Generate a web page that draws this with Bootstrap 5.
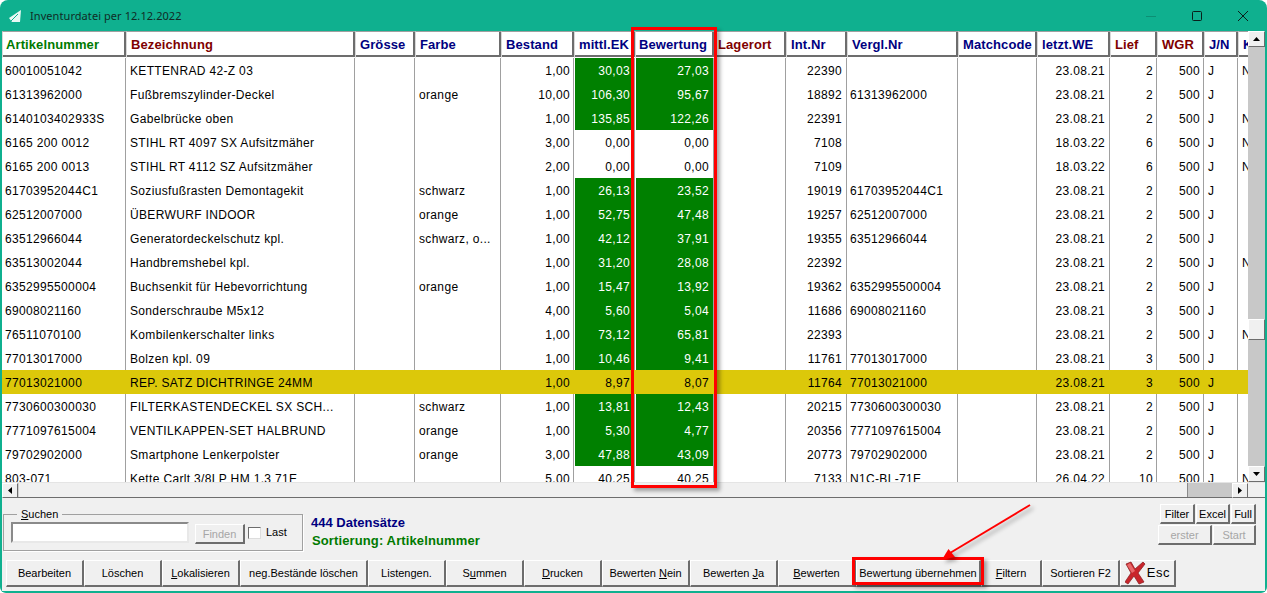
<!doctype html>
<html lang="de">
<head>
<meta charset="utf-8">
<title>Inventurdatei</title>
<link href="https://cdn.jsdelivr.net/npm/bootstrap@5.3.0/dist/css/bootstrap.min.css" rel="stylesheet">
<style>
html,body{height:100%;margin:0;background:#fff;overflow:hidden}
body{font:11px/14px "Liberation Sans",Arial,sans-serif;color:#000}
.appwin{position:relative;width:1267px;height:593px;background:#0fb08f;border-radius:8px 8px 6px 6px;overflow:hidden;padding:0 2px 2px}
.titlebar{height:31px;margin:0 -2px;padding-left:9px;color:#102c26;font:11px/16px "Noto Sans","Open Sans",sans-serif;letter-spacing:.07px}
.titlebar .ttl{margin-left:8px}
.ticon{margin-top:2px}
.wctls{margin-right:1px}
.wctl{width:46px;height:31px}
.mainarea{height:451px;background:#fff}
.gridpane{width:1246px;height:451px;overflow:hidden}
.datagrid{table-layout:fixed;width:1266px;border-collapse:separate;border-spacing:0;margin:0;font-size:12px;line-height:14px}
.datagrid col:nth-child(1){width:124px}.datagrid col:nth-child(2){width:229px}.datagrid col:nth-child(3){width:60px}
.datagrid col:nth-child(4){width:86px}.datagrid col:nth-child(5){width:73px}.datagrid col:nth-child(6){width:61px}
.datagrid col:nth-child(7){width:79px}.datagrid col:nth-child(8){width:72px}.datagrid col:nth-child(9){width:61px}
.datagrid col:nth-child(10){width:111px}.datagrid col:nth-child(11){width:79px}.datagrid col:nth-child(12){width:73px}
.datagrid col:nth-child(13){width:47px}.datagrid col:nth-child(14){width:47px}.datagrid col:nth-child(15){width:34px}
.datagrid col:nth-child(16){width:30px}
.table.datagrid>thead>tr>th{height:27px;padding:1px 1px 0 4px;font-size:13px;font-weight:700;line-height:14px;letter-spacing:.1px;white-space:nowrap;overflow:hidden;vertical-align:middle;background:#fff;border-top:1px solid #a0a0a0;border-bottom:1px solid #fff;border-left:1px solid #d8d8d8;box-shadow:inset -2px -2px 0 #6d6d6d}
.table.datagrid>thead>tr>th:first-child,.table.datagrid>thead>tr>th:nth-child(7),.table.datagrid>thead>tr>th:nth-child(8){padding-left:3px}
.table.datagrid>tbody>tr>td{height:24px;padding:1px 3px 0 3px;letter-spacing:.34px;white-space:nowrap;overflow:hidden;vertical-align:middle;background:#fff;color:#000;border-right:1px solid #a0a0a0;box-shadow:none}
.table.datagrid>tbody>tr>td.nm{padding-left:4px}
.table.datagrid>tbody>tr>td.pr4{padding-right:4px}
.table.datagrid>tbody>tr>td.gr{background:#008000;color:#fff;border-left:1px solid #fff}
.table.datagrid>tbody>tr.hl>td,.table.datagrid>tbody>tr.hl>td.gr{background:#dcc80a;color:#000;border-color:#dcc80a}
.table.datagrid>thead>tr>th.cg{color:#007a00}.table.datagrid>thead>tr>th.cr{color:#800000}.table.datagrid>thead>tr>th.cb{color:#000080}
.vbar{width:17px;height:451px;background:#c8c8c8}
.sbtn{background:#f0f0f0;border-top:1px solid #fff;border-left:1px solid #fff;border-right:1px solid #6d6d6d;border-bottom:1px solid #6d6d6d}
.vbar .sbtn{height:16px;flex:none}
.vbar .vthumb{height:21px;margin-top:272px;flex:none}
.vgap{flex:1}
.hbar{height:16px;background:#f0f0f0;border-top:1px solid #e4e4e4;border-bottom:1px solid #6d6d6d}
.hbar .sbtn{width:16px;height:15px;flex:none}
.hthumb{width:1170px;flex:none;border-right:1px solid #8a8a8a;border-left:1px solid #cfcfcf}
.htrack{width:44px;background:#c8c8c8;flex:none}
.panel{height:93px;background:#f0f0f0}
.toparea{height:62px}
.searchbox{width:300px;height:44px;margin:9px 0 0 1px;border:1px solid #a0a0a0;padding:0 0 0 7px;box-shadow:1px 1px 0 #fff}
.searchbox legend{float:none;width:auto;margin:0 0 0 6px;padding:0 4px;font-size:11px;line-height:14px}
.srchinput{width:178px;height:21px;padding:0;margin-top:1px;border-radius:0;background:#fff;border:2px solid;border-color:#8a8a8a #e8e8e8 #e8e8e8 #8a8a8a}
.bvl{border-radius:0;padding:0;background:#f0f0f0;color:#000;font-size:11px;line-height:14px;border-style:solid;border-width:1px 2px 2px 1px;border-color:#fff #6d6d6d #6d6d6d #fff;white-space:nowrap}
.bvl:disabled{background:#f0f0f0;color:#a6a6a6;opacity:1;border-color:#fff #6d6d6d #6d6d6d #fff}
.findbtn{width:50px;height:20px;margin:3px 0 0 6px}
.ckbox{width:13px;height:12px;margin:6px 0 0 3px;background:#fff;border:1px solid;border-color:#6d6d6d #ddd #ddd #6d6d6d;flex:none}
.lastlbl{margin:4px 0 0 5px}
.infobox{margin:16px 0 0 8px;font-size:13px;font-weight:700;line-height:18px}
.infonavy{color:#000080}.infogrn{color:#007a00;padding-left:1px;letter-spacing:.12px}
.rbtns{margin:6px 9px 0 0}
.rrow{gap:1px;height:20px}
.rrow2{margin-top:1px}
.w34{width:35px}.w33{width:34px}.w25{width:25px}.w54{width:54px}.w43{width:43px}
.btnrow{padding-left:4px;height:27px}
.btnrow .bvl{height:27px;flex:none}
.b78{width:78px}.b128{width:128px}.b88{width:88px}.b125{width:125px}.b61{width:61px}.b56{width:56px}
.btnrow .escinner{font-size:13px;letter-spacing:.6px;gap:1px}
.annot{position:absolute;border:3px solid #f00;box-shadow:3px 3px 4px rgba(0,0,0,.35);pointer-events:none}
.annot1{left:631px;top:27px;width:86px;height:461px}
.annot2{left:852px;top:557px;width:132px;height:28px}
.arrowsvg{position:absolute;left:0;top:0;width:1267px;height:593px;pointer-events:none;filter:drop-shadow(3px 3px 2px rgba(0,0,0,.35))}
</style>
</head>
<body>
<div class="appwin d-flex flex-column">
  <div class="titlebar d-flex align-items-center">
    <svg class="ticon" width="13" height="13" viewBox="0 0 13 13"><polygon points="0,8 12,0 11,12 3,12" fill="#e9f8f4"/><polyline points="2,11 9,4" fill="none" stroke="#0fb08f" stroke-width="1"/></svg>
    <span class="ttl">Inventurdatei per 12.12.2022</span>
    <div class="wctls ms-auto d-flex">
      <div class="wctl d-flex align-items-center justify-content-center"><svg width="10" height="10" viewBox="0 0 10 10"><line x1="0" y1="5.5" x2="10" y2="5.5" stroke="#0c8f74"/></svg></div>
      <div class="wctl d-flex align-items-center justify-content-center"><svg width="10" height="10" viewBox="0 0 10 10"><rect x=".5" y=".5" width="9" height="9" rx="1" fill="none" stroke="#0a1f1a"/></svg></div>
      <div class="wctl d-flex align-items-center justify-content-center"><svg width="10" height="10" viewBox="0 0 10 10"><path d="M0 0L10 10M10 0L0 10" stroke="#0a1f1a" fill="none"/></svg></div>
    </div>
  </div>
  <div class="mainarea d-flex">
    <div class="gridpane">
      <table class="table table-borderless datagrid">
        <colgroup><col><col><col><col><col><col><col><col><col><col><col><col><col><col><col><col></colgroup>
        <thead><tr>
          <th class="cg">Artikelnummer</th><th class="cr">Bezeichnung</th><th class="cb">Grösse</th><th class="cb">Farbe</th><th class="cb">Bestand</th><th class="cb">mittl.EK</th><th class="cb">Bewertung</th><th class="cr">Lagerort</th><th class="cb">Int.Nr</th><th class="cb">Vergl.Nr</th><th class="cb">Matchcode</th><th class="cb">letzt.WE</th><th class="cr">Lief</th><th class="cr">WGR</th><th class="cb">J/N</th><th class="cb">K</th>
        </tr></thead>
        <tbody>
<tr><td>60010051042</td><td class="nm">KETTENRAD 42-Z 03</td><td></td><td class="nm"></td><td class="text-end">1,00</td><td class="text-end gr pr4">30,03</td><td class="text-end gr pr4">27,03</td><td></td><td class="text-end pr4">22390</td><td></td><td></td><td class="text-end pr4">23.08.21</td><td class="text-end">2</td><td class="text-end">500</td><td class="nm">J</td><td class="nm">N</td></tr>
<tr><td>61313962000</td><td class="nm">Fußbremszylinder-Deckel</td><td></td><td class="nm">orange</td><td class="text-end">10,00</td><td class="text-end gr pr4">106,30</td><td class="text-end gr pr4">95,67</td><td></td><td class="text-end pr4">18892</td><td>61313962000</td><td></td><td class="text-end pr4">23.08.21</td><td class="text-end">2</td><td class="text-end">500</td><td class="nm">J</td><td class="nm"></td></tr>
<tr><td>6140103402933S</td><td class="nm">Gabelbrücke oben</td><td></td><td class="nm"></td><td class="text-end">1,00</td><td class="text-end gr pr4">135,85</td><td class="text-end gr pr4">122,26</td><td></td><td class="text-end pr4">22391</td><td></td><td></td><td class="text-end pr4">23.08.21</td><td class="text-end">2</td><td class="text-end">500</td><td class="nm">J</td><td class="nm">N</td></tr>
<tr><td>6165 200 0012</td><td class="nm">STIHL RT 4097 SX Aufsitzmäher</td><td></td><td class="nm"></td><td class="text-end">3,00</td><td class="text-end pr4">0,00</td><td class="text-end pr4">0,00</td><td></td><td class="text-end pr4">7108</td><td></td><td></td><td class="text-end pr4">18.03.22</td><td class="text-end">6</td><td class="text-end">500</td><td class="nm">J</td><td class="nm">N</td></tr>
<tr><td>6165 200 0013</td><td class="nm">STIHL RT 4112 SZ Aufsitzmäher</td><td></td><td class="nm"></td><td class="text-end">2,00</td><td class="text-end pr4">0,00</td><td class="text-end pr4">0,00</td><td></td><td class="text-end pr4">7109</td><td></td><td></td><td class="text-end pr4">18.03.22</td><td class="text-end">6</td><td class="text-end">500</td><td class="nm">J</td><td class="nm">N</td></tr>
<tr><td>61703952044C1</td><td class="nm">Soziusfußrasten Demontagekit</td><td></td><td class="nm">schwarz</td><td class="text-end">1,00</td><td class="text-end gr pr4">26,13</td><td class="text-end gr pr4">23,52</td><td></td><td class="text-end pr4">19019</td><td>61703952044C1</td><td></td><td class="text-end pr4">23.08.21</td><td class="text-end">2</td><td class="text-end">500</td><td class="nm">J</td><td class="nm"></td></tr>
<tr><td>62512007000</td><td class="nm">ÜBERWURF INDOOR</td><td></td><td class="nm">orange</td><td class="text-end">1,00</td><td class="text-end gr pr4">52,75</td><td class="text-end gr pr4">47,48</td><td></td><td class="text-end pr4">19257</td><td>62512007000</td><td></td><td class="text-end pr4">23.08.21</td><td class="text-end">2</td><td class="text-end">500</td><td class="nm">J</td><td class="nm"></td></tr>
<tr><td>63512966044</td><td class="nm">Generatordeckelschutz kpl.</td><td></td><td class="nm">schwarz, o...</td><td class="text-end">1,00</td><td class="text-end gr pr4">42,12</td><td class="text-end gr pr4">37,91</td><td></td><td class="text-end pr4">19355</td><td>63512966044</td><td></td><td class="text-end pr4">23.08.21</td><td class="text-end">2</td><td class="text-end">500</td><td class="nm">J</td><td class="nm"></td></tr>
<tr><td>63513002044</td><td class="nm">Handbremshebel kpl.</td><td></td><td class="nm"></td><td class="text-end">1,00</td><td class="text-end gr pr4">31,20</td><td class="text-end gr pr4">28,08</td><td></td><td class="text-end pr4">22392</td><td></td><td></td><td class="text-end pr4">23.08.21</td><td class="text-end">2</td><td class="text-end">500</td><td class="nm">J</td><td class="nm">N</td></tr>
<tr><td>6352995500004</td><td class="nm">Buchsenkit für Hebevorrichtung</td><td></td><td class="nm">orange</td><td class="text-end">1,00</td><td class="text-end gr pr4">15,47</td><td class="text-end gr pr4">13,92</td><td></td><td class="text-end pr4">19362</td><td>6352995500004</td><td></td><td class="text-end pr4">23.08.21</td><td class="text-end">2</td><td class="text-end">500</td><td class="nm">J</td><td class="nm"></td></tr>
<tr><td>69008021160</td><td class="nm">Sonderschraube M5x12</td><td></td><td class="nm"></td><td class="text-end">4,00</td><td class="text-end gr pr4">5,60</td><td class="text-end gr pr4">5,04</td><td></td><td class="text-end pr4">11686</td><td>69008021160</td><td></td><td class="text-end pr4">23.08.21</td><td class="text-end">3</td><td class="text-end">500</td><td class="nm">J</td><td class="nm"></td></tr>
<tr><td>76511070100</td><td class="nm">Kombilenkerschalter links</td><td></td><td class="nm"></td><td class="text-end">1,00</td><td class="text-end gr pr4">73,12</td><td class="text-end gr pr4">65,81</td><td></td><td class="text-end pr4">22393</td><td></td><td></td><td class="text-end pr4">23.08.21</td><td class="text-end">2</td><td class="text-end">500</td><td class="nm">J</td><td class="nm">N</td></tr>
<tr><td>77013017000</td><td class="nm">Bolzen kpl. 09</td><td></td><td class="nm"></td><td class="text-end">1,00</td><td class="text-end gr pr4">10,46</td><td class="text-end gr pr4">9,41</td><td></td><td class="text-end pr4">11761</td><td>77013017000</td><td></td><td class="text-end pr4">23.08.21</td><td class="text-end">3</td><td class="text-end">500</td><td class="nm">J</td><td class="nm"></td></tr>
<tr class="hl"><td>77013021000</td><td class="nm">REP. SATZ DICHTRINGE 24MM</td><td></td><td class="nm"></td><td class="text-end">1,00</td><td class="text-end gr pr4">8,97</td><td class="text-end gr pr4">8,07</td><td></td><td class="text-end pr4">11764</td><td>77013021000</td><td></td><td class="text-end pr4">23.08.21</td><td class="text-end">3</td><td class="text-end">500</td><td class="nm">J</td><td class="nm"></td></tr>
<tr><td>7730600300030</td><td class="nm">FILTERKASTENDECKEL SX SCH...</td><td></td><td class="nm">schwarz</td><td class="text-end">1,00</td><td class="text-end gr pr4">13,81</td><td class="text-end gr pr4">12,43</td><td></td><td class="text-end pr4">20215</td><td>7730600300030</td><td></td><td class="text-end pr4">23.08.21</td><td class="text-end">2</td><td class="text-end">500</td><td class="nm">J</td><td class="nm"></td></tr>
<tr><td>7771097615004</td><td class="nm">VENTILKAPPEN-SET HALBRUND</td><td></td><td class="nm">orange</td><td class="text-end">1,00</td><td class="text-end gr pr4">5,30</td><td class="text-end gr pr4">4,77</td><td></td><td class="text-end pr4">20356</td><td>7771097615004</td><td></td><td class="text-end pr4">23.08.21</td><td class="text-end">2</td><td class="text-end">500</td><td class="nm">J</td><td class="nm"></td></tr>
<tr><td>79702902000</td><td class="nm">Smartphone Lenkerpolster</td><td></td><td class="nm">orange</td><td class="text-end">3,00</td><td class="text-end gr pr4">47,88</td><td class="text-end gr pr4">43,09</td><td></td><td class="text-end pr4">20773</td><td>79702902000</td><td></td><td class="text-end pr4">23.08.21</td><td class="text-end">2</td><td class="text-end">500</td><td class="nm">J</td><td class="nm"></td></tr>
<tr><td>803-071</td><td class="nm">Kette Carlt 3/8LP HM 1,3 71E</td><td></td><td class="nm"></td><td class="text-end">5,00</td><td class="text-end pr4">40,25</td><td class="text-end pr4">40,25</td><td></td><td class="text-end pr4">7133</td><td>N1C-BL-71E</td><td></td><td class="text-end pr4">26.04.22</td><td class="text-end">10</td><td class="text-end">500</td><td class="nm">J</td><td class="nm">N</td></tr>
        </tbody>
      </table>
    </div>
    <div class="vbar d-flex flex-column">
      <div class="sbtn d-flex align-items-center justify-content-center"><svg width="7" height="4" viewBox="0 0 7 4"><polygon points="3.5,0 7,4 0,4" fill="#000"/></svg></div>
      <div class="sbtn vthumb"></div>
      <div class="vgap"></div>
      <div class="sbtn d-flex align-items-center justify-content-center"><svg width="7" height="4" viewBox="0 0 7 4"><polygon points="0,0 7,0 3.5,4" fill="#000"/></svg></div>
    </div>
  </div>
  <div class="hbar d-flex">
    <div class="sbtn d-flex align-items-center justify-content-center"><svg width="4" height="7" viewBox="0 0 4 7"><polygon points="4,0 4,7 0,3.5" fill="#000"/></svg></div>
    <div class="hthumb"></div>
    <div class="htrack"></div>
    <div class="sbtn d-flex align-items-center justify-content-center"><svg width="4" height="7" viewBox="0 0 4 7"><polygon points="0,0 4,3.5 0,7" fill="#000"/></svg></div>
  </div>
  <div class="panel d-flex flex-column">
    <div class="toparea d-flex">
      <fieldset class="searchbox">
        <legend><u>S</u>uchen</legend>
        <div class="d-flex">
          <input class="srchinput form-control" type="text" aria-label="Suchen">
          <button class="btn bvl findbtn" disabled>Finden</button>
          <div class="ckbox"></div>
          <span class="lastlbl">Last</span>
        </div>
      </fieldset>
      <div class="infobox">
        <div class="infonavy">444 Datensätze</div>
        <div class="infogrn">Sortierung: Artikelnummer</div>
      </div>
      <div class="rbtns ms-auto d-flex flex-column align-items-end">
        <div class="rrow d-flex">
          <button class="btn bvl w34">Filter</button><button class="btn bvl w33">Excel</button><button class="btn bvl w25">Full</button>
        </div>
        <div class="rrow rrow2 d-flex">
          <button class="btn bvl w54" disabled>erster</button><button class="btn bvl w43" disabled>Start</button>
        </div>
      </div>
    </div>
    <div class="btnrow d-flex">
      <button class="btn bvl b78">Bearbeiten</button>
      <button class="btn bvl b78">Löschen</button>
      <button class="btn bvl b78"><u>L</u>okalisieren</button>
      <button class="btn bvl b128">neg.Bestände löschen</button>
      <button class="btn bvl b78">Listengen.</button>
      <button class="btn bvl b78">S<u>u</u>mmen</button>
      <button class="btn bvl b78"><u>D</u>rucken</button>
      <button class="btn bvl b88">Bewerten <u>N</u>ein</button>
      <button class="btn bvl b88">Bewerten <u>J</u>a</button>
      <button class="btn bvl b78"><u>B</u>ewerten</button>
      <button class="btn bvl b125">Bewertung übernehmen</button>
      <button class="btn bvl b61"><u>F</u>iltern</button>
      <button class="btn bvl b78">Sortieren F2</button>
      <button class="btn bvl b56 d-flex align-items-center justify-content-center escinner">
        <svg width="21" height="24" viewBox="0 0 21 24"><polygon points="1,3 6,1 10,8 18,1 20,3 13,12 19,21 14,23 9,15 3,23 0,21 6,12" fill="#c9252b" stroke="#8f2226" stroke-width=".8"/><polygon points="2,4 5,2 10,10 7,12" fill="#e8696b"/></svg>
        <span>Esc</span>
      </button>
    </div>
  </div>
  <div class="annot annot1"></div>
  <div class="annot annot2"></div>
  <svg class="arrowsvg" viewBox="0 0 1267 593"><line x1="1030" y1="505" x2="950" y2="553" stroke="#f00" stroke-width="2"/><polygon points="942,559.5 948.5,549 955,557" fill="#f00"/></svg>
</div>
<script src="https://cdn.jsdelivr.net/npm/bootstrap@5.3.0/dist/js/bootstrap.bundle.min.js"></script>
</body>
</html>
